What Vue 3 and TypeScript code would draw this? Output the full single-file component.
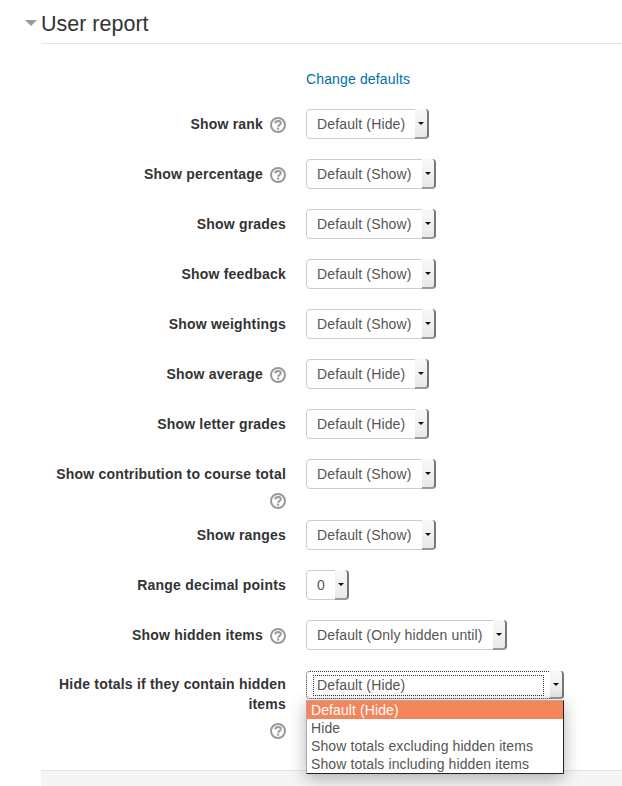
<template>
  <div class="page">
    <h3 class="section-title">
      <span class="caret"></span>
      User report
    </h3>

    <div class="form">
      <div class="defaults-row">
        <a class="link" href="#">Change defaults</a>
      </div>

      <div
        v-for="row in rows"
        :key="row.label"
        class="row"
        :class="{ wrapped: row.wrapped, open: row.open }"
      >
        <div class="label-col">
          <span class="label-text">{{ row.label }}</span>
          <svg v-if="row.help" class="help" viewBox="0 0 16 16" width="16" height="16">
            <circle cx="8" cy="8" r="7" fill="#fff" stroke="#999" stroke-width="2" />
            <path d="M5.3 6.4C5.4 4.7 6.5 3.9 8 3.9c1.7 0 2.8.9 2.8 2.2 0 2.1-2.7 1.8-2.7 3.6" fill="none" stroke="#999" stroke-width="2" />
            <rect x="7" y="10.6" width="2.2" height="2" fill="#999" />
          </svg>
        </div>
        <div class="control-col">
          <div class="select" :class="{ focused: row.open }">
            <span class="select-text">{{ row.value }}</span>
            <span class="select-btn"><i class="arrow"></i></span>
          </div>
          <ul v-if="row.open" class="dropdown">
            <li
              v-for="(opt, i) in hideOptions"
              :key="opt"
              :class="{ active: i === 0 }"
            >
              {{ opt }}
            </li>
          </ul>
        </div>
      </div>
    </div>

    <div class="footer-band"></div>
  </div>
</template>

<script setup lang="ts">
interface Row {
  label: string
  value: string
  help?: boolean
  open?: boolean
  wrapped?: boolean
}

const hideOptions = [
  'Default (Hide)',
  'Hide',
  'Show totals excluding hidden items',
  'Show totals including hidden items'
]

const rows: Row[] = [
  { label: 'Show rank', value: 'Default (Hide)', help: true },
  { label: 'Show percentage', value: 'Default (Show)', help: true },
  { label: 'Show grades', value: 'Default (Show)' },
  { label: 'Show feedback', value: 'Default (Show)' },
  { label: 'Show weightings', value: 'Default (Show)' },
  { label: 'Show average', value: 'Default (Hide)', help: true },
  { label: 'Show letter grades', value: 'Default (Hide)' },
  { label: 'Show contribution to course total', value: 'Default (Show)', help: true, wrapped: true },
  { label: 'Show ranges', value: 'Default (Show)' },
  { label: 'Range decimal points', value: '0' },
  { label: 'Show hidden items', value: 'Default (Only hidden until)', help: true },
  { label: 'Hide totals if they contain hidden items', value: 'Default (Hide)', help: true, open: true, wrapped: true }
]
</script>

<style>
html,
body {
  margin: 0;
  background: #fff;
  overflow: hidden;
}
</style>

<style scoped>
.page {
  width: 622px;
  height: 786px;
  overflow: hidden;
  position: relative;
  font-family: "Liberation Sans", Arial, sans-serif;
  font-size: 14px;
  letter-spacing: 0.14px;
  color: #333;
}

.section-title {
  margin: 0 0 0 41px;
  height: 43px;
  box-sizing: content-box;
  border-bottom: 1px solid #e3e3e3;
  font-size: 21.5px;
  font-weight: 400;
  letter-spacing: 0;
  line-height: 48px;
  position: relative;
}

.caret {
  position: absolute;
  left: -16px;
  top: 20px;
  border-left: 6px solid transparent;
  border-right: 6px solid transparent;
  border-top: 6px solid #999;
}

.form {
  padding-top: 25px;
  padding-left: 41px;
}

.defaults-row {
  padding-left: 265px;
  height: 40px;
  line-height: 20px;
}

.link {
  color: #0070a8;
  text-decoration: none;
}

.row {
  display: flex;
  gap: 20px;
  padding-bottom: 9px;
}

.label-col {
  width: 245px;
  text-align: right;
  line-height: 20px;
  padding-top: 5px;
  font-weight: 700;
  letter-spacing: 0.2px;
}

.open .label-col {
  padding-top: 4px;
}

.help {
  margin-left: 7px;
  vertical-align: -4px;
}

.wrapped .help {
  display: block;
  margin: 9px 0 2px auto;
}

.control-col {
  position: relative;
  padding-bottom: 11px;
}

.select {
  display: inline-flex;
  vertical-align: top;
  height: 30px;
  box-sizing: border-box;
  border: 1px solid #ccc;
  border-radius: 4px;
  background: #fff;
  color: #555;
  line-height: 28px;
  padding-left: 10px;
}

.select-text {
  margin-right: 10px;
}

.select-btn {
  width: 14px;
  margin: -1px -1px -1px 0;
  background: linear-gradient(#f9f9f9, #e8e8e8);
  border-right: 2px solid #777;
  border-bottom: 2px solid #999;
  border-radius: 0 4px 4px 0;
  box-sizing: border-box;
  display: flex;
  align-items: center;
  justify-content: center;
}

.arrow {
  border-left: 3px solid transparent;
  border-right: 3px solid transparent;
  border-top: 3px solid #111;
}

.select.focused {
  width: 258px;
  height: 28px;
  margin-top: 1px;
  border: 1px dotted #333;
  background: #fff;
  padding-left: 6px;
  align-items: stretch;
}

.select.focused .select-text {
  flex: 1;
  margin: 3px 6px 2px 0;
  padding-left: 3px;
  border: 1px dotted #333;
  line-height: 18px;
}

.dropdown {
  position: absolute;
  z-index: 2;
  left: 0;
  top: 30px;
  width: 258px;
  box-sizing: border-box;
  margin: 0;
  padding: 0;
  list-style: none;
  background: #fff;
  border: 1px solid #222;
  border-left-color: #aaa;
  border-top-color: #aaa;
  box-shadow: 0 4px 16px rgba(0, 0, 0, 0.3);
  color: #555;
  letter-spacing: 0.1px;
  line-height: 18px;
}

.dropdown li {
  padding-left: 4px;
  height: 18px;
}

.dropdown li.active {
  background: #f5845a;
  color: #fff;
}

.footer-band {
  position: absolute;
  left: 41px;
  right: 0;
  top: 770px;
  bottom: 0;
  background: #f5f5f5;
  border-top: 1px solid #e3e3e3;
}
</style>
